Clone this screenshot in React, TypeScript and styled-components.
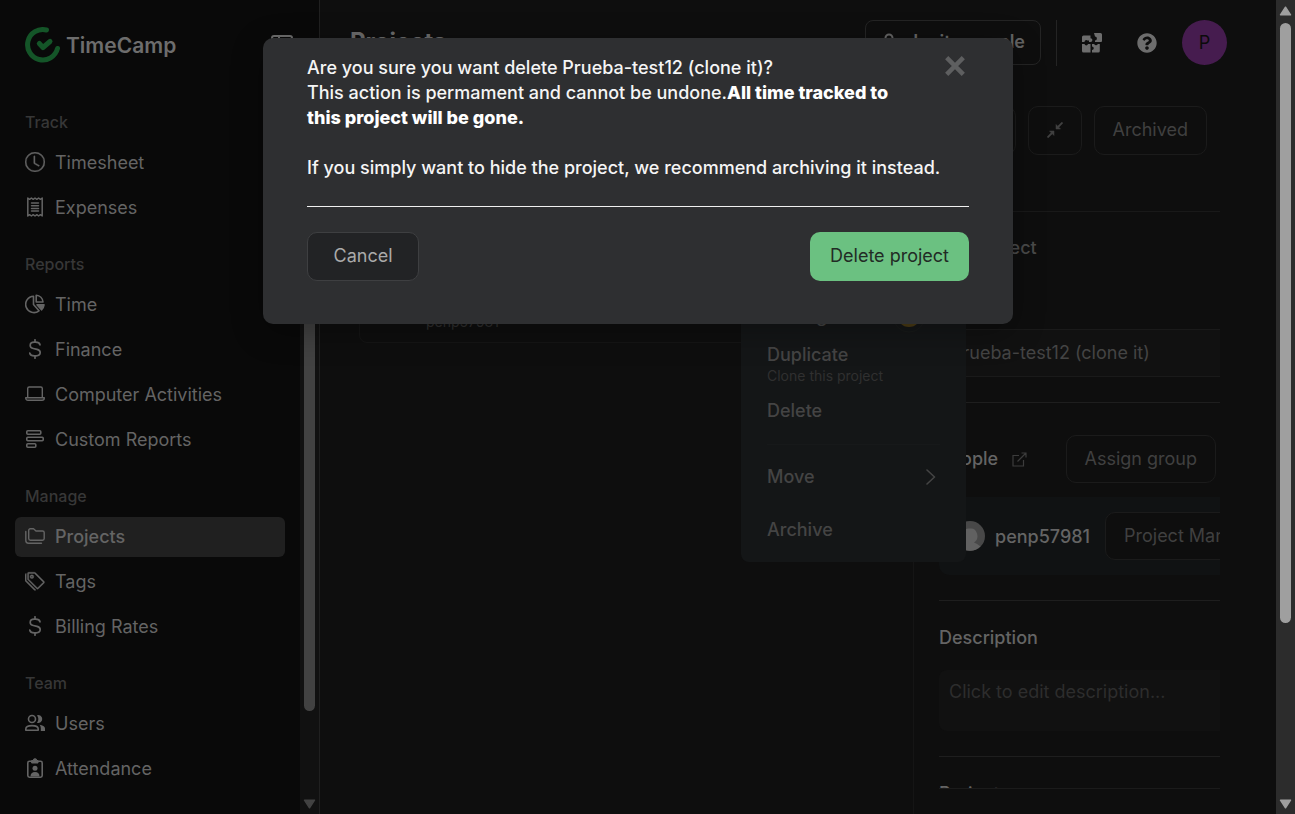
import React from "react";
import styled, { createGlobalStyle } from "styled-components";
import { BsClock, BsTags } from "react-icons/bs";
import { FaQuestionCircle } from "react-icons/fa";

const GlobalStyle = createGlobalStyle`
  *, *::before, *::after { box-sizing: border-box; }
  body { margin: 0; background: #0e0e0e; overflow: hidden; }
  body, button, input, textarea, select {
    font-family: Inter, "Open Sans", "Liberation Sans", sans-serif;
    font-size: 18px;
  }
  h1, h2, p, hr, ul { margin: 0; padding: 0; }
  ul { list-style: none; }
  button { cursor: pointer; }
`;

const Shell = styled.div`
  display: flex;
  height: 100vh;
  overflow: hidden;
  color: #6a6a6a;
`;

const Viewport = styled.div`
  position: relative;
  display: flex;
  flex: 1;
  min-width: 0;
`;

/* Scroll bars */
const Track = styled.div<{ $bg: string }>`
  display: flex;
  flex-direction: column;
  align-items: center;
  flex: none;
  width: 19px;
  padding: 6px 0 5px;
  gap: 7px;
  background: ${(p) => p.$bg};
`;
const Groove = styled.div`
  flex: 1;
  width: 11px;
`;
const Thumb = styled.div<{ $color: string; $share: number }>`
  height: ${(p) => p.$share}%;
  border-radius: 6px;
  background: ${(p) => p.$color};
`;

function Scrollbar({ bg, color, share }: { bg: string; color: string; share: number }) {
  return (
    <Track $bg={bg} aria-hidden="true">
      <svg width="13" height="10" viewBox="0 0 13 10">
        <path d="M6.500 1.200 L11.500 8.800 H1.500 Z" fill={color} stroke={color} strokeWidth="1.500" strokeLinejoin="round" />
      </svg>
      <Groove>
        <Thumb $color={color} $share={share} />
      </Groove>
      <svg width="13" height="10" viewBox="0 0 13 10">
        <path d="M6.500 8.800 L11.500 1.200 H1.500 Z" fill={color} stroke={color} strokeWidth="1.500" strokeLinejoin="round" />
      </svg>
    </Track>
  );
}

/* Sidebar */
const Sidebar = styled.aside`
  display: flex;
  flex-direction: column;
  flex: none;
  width: 320px;
  background: #090909;
  border-right: 1px solid #202020;
`;
const SidebarTop = styled.div`
  display: flex;
  align-items: center;
  justify-content: space-between;
  flex: none;
  height: 90px;
  padding: 0 26px 0 25px;
`;
const Brand = styled.a`
  display: flex;
  align-items: center;
  gap: 6px;
  color: #6d6d6d;
  font-size: 21px;
  font-weight: 600;
  text-decoration: none;
`;
const IconButton = styled.button`
  display: flex;
  padding: 0;
  border: 0;
  background: none;
  color: #6d6d6d;
`;
const SidebarBody = styled.div`
  display: flex;
  flex: 1;
  min-height: 0;
`;
const Nav = styled.nav`
  display: flex;
  flex-direction: column;
  flex: 1;
  gap: 25px;
  padding: 21px 15px 0;
  overflow: hidden;
`;
const NavLabel = styled.h2`
  padding-left: 10px;
  margin-bottom: 9px;
  font-size: 16px;
  font-weight: 500;
  line-height: 23px;
  color: #373737;
`;
const NavList = styled.ul`
  display: flex;
  flex-direction: column;
  gap: 5px;
`;
const NavLink = styled.a<{ $active?: boolean }>`
  display: flex;
  align-items: center;
  gap: 10px;
  height: 40px;
  padding: 0 10px 2px;
  border-radius: 6px;
  background: ${(p) => (p.$active ? "#202020" : "transparent")};
  color: #646464;
  font-weight: ${(p) => (p.$active ? 500 : 400)};
  text-decoration: none;

  svg { flex: none; width: 20px; height: 20px; }
`;

const stroke = { fill: "none", stroke: "currentColor", strokeWidth: 1.6, strokeLinejoin: "round", strokeLinecap: "round" } as const;

const ReceiptIcon = () => (
  <svg viewBox="0 0 20 20" {...stroke} strokeWidth="1.500">
    <path d="M2.800 1 4.600 2.300 6.400 1 8.200 2.300 10 1 11.800 2.300 13.600 1 15.400 2.300 17.200 1V19L15.400 17.700 13.600 19 11.800 17.700 10 19 8.200 17.700 6.400 19 4.600 17.700 2.800 19Z" />
    <path d="M6.500 6h7M6.500 8.700h7M6.500 11.400h7M6.500 14.100h7" />
  </svg>
);
const PieIcon = () => (
  <svg viewBox="0 0 20 20" {...stroke}>
    <path d="M8.500 2.200A8.200 8.200 0 1 0 14 16.800L8.500 10.500Z" />
    <path d="M11.200 1.200A7.500 7.500 0 0 1 18 8H11.200Z" />
    <path d="M12 10.800H19A8 8 0 0 1 16.500 15.800Z" fill="currentColor" />
  </svg>
);
const DollarIcon = () => (
  <svg viewBox="0 0 20 20" {...stroke} strokeWidth="1.700">
    <path d="M10 .8V3.200M10 16.800V19.200" />
    <path d="M15 5.800C14.600 4.100 13.200 3.200 10.500 3.200H9.300C6.700 3.200 5.200 4.500 5.200 6.400 5.200 8.200 6.300 9 8.300 9.500L12 10.400C14.200 10.900 15.200 11.900 15.200 13.600 15.200 15.600 13.700 16.800 11.200 16.800H9.300C6.800 16.800 5.200 15.900 4.800 14.200" />
  </svg>
);
const LaptopIcon = () => (
  <svg viewBox="0 0 20 20" {...stroke} strokeWidth="1.400">
    <path d="M2.700 13V4.500C2.700 3.500 3.200 3 4.200 3H15.800C16.800 3 17.300 3.500 17.300 4.500V13" />
    <path d="M.7 13.700H19.300C19.300 15.400 18.500 16.300 17 16.300H3C1.500 16.300.7 15.400.7 13.700Z" />
  </svg>
);
const BarsIcon = () => (
  <svg viewBox="0 0 20 20" {...stroke}>
    <rect x="1.800" y="1.800" width="14" height="3.400" rx="1" />
    <rect x="1.800" y="8.300" width="16.400" height="3.400" rx="1" />
    <rect x="1.800" y="14.800" width="9" height="3.400" rx="1" />
  </svg>
);
const FoldersIcon = () => (
  <svg viewBox="0 0 20 20" {...stroke} strokeWidth="1.400">
    <path d="M3.700 4.400C3.700 3.400 4.400 2.800 5.300 2.800H8.500L11 5H17.500C18.500 5 19.200 5.600 19.200 6.500V12.500C19.200 13.500 18.500 14.200 17.500 14.200H5.300C4.400 14.200 3.700 13.500 3.700 12.500Z" />
    <path d="M.8 5.500V14.500C.8 16.300 1.800 17.200 3.500 17.200H16.500" />
  </svg>
);
const UsersIcon = () => (
  <svg viewBox="0 0 20 20" {...stroke}>
    <circle cx="7" cy="6" r="3.500" />
    <path d="M.8 17.200V16C.8 13.800 2.800 12.600 7 12.600S13.200 13.800 13.200 16V17.200Z" />
    <path d="M12 2.200A4 4 0 1 1 12 9.800 6.500 6.500 0 0 0 12 2.200ZM14.500 11.800C17.500 12.200 20 13.400 20 15.500V18H15.800V15.500C15.800 14 15.500 12.900 14.500 11.800Z" fill="currentColor" stroke="none" />
  </svg>
);
const BadgeIcon = () => (
  <svg viewBox="0 0 20 20" {...stroke}>
    <rect x="2.800" y="3.300" width="14.400" height="15.900" rx="1.600" />
    <path d="M7 2.500H8.200A1.800 1.800 0 0 1 11.800 2.500H13V5H7Z" fill="currentColor" strokeWidth="1" />
    <circle cx="10" cy="10.200" r="2.500" fill="currentColor" stroke="none" />
    <path d="M5.500 18.500C5.500 15.500 7 14 10 14S14.500 15.500 14.500 18.500Z" fill="currentColor" stroke="none" />
  </svg>
);

const TagsIcon = styled(BsTags)`
  stroke: currentColor;
  stroke-width: 0.3;
`;
const ClockIcon = styled(BsClock)`
  stroke: currentColor;
  stroke-width: 0.3;
`;

const groups = [
  { label: "Track", items: [["Timesheet", ClockIcon], ["Expenses", ReceiptIcon]] },
  { label: "Reports", items: [["Time", PieIcon], ["Finance", DollarIcon], ["Computer Activities", LaptopIcon], ["Custom Reports", BarsIcon]] },
  { label: "Manage", items: [["Projects", FoldersIcon], ["Tags", TagsIcon], ["Billing Rates", DollarIcon]] },
  { label: "Team", items: [["Users", UsersIcon], ["Attendance", BadgeIcon]] },
] as { label: string; items: [string, React.ComponentType][] }[];

/* Main area */
const Main = styled.main`
  position: relative;
  display: flex;
  flex-direction: column;
  flex: 1;
  min-width: 0;
`;
const Header = styled.header`
  display: flex;
  align-items: center;
  justify-content: space-between;
  flex: none;
  height: 85px;
  padding: 0 49px 0 30px;
`;
const Title = styled.h1`
  padding-bottom: 2px;
  font-size: 24px;
  font-weight: 700;
  line-height: 30px;
  color: #6a6a6a;
`;
const HeaderTools = styled.div`
  display: flex;
  align-items: center;
`;
const InviteButton = styled.button`
  display: flex;
  align-items: center;
  gap: 16px;
  height: 45px;
  padding: 0 15px 2px;
  border: 1px solid #242424;
  border-radius: 8px;
  background: none;
  color: #646464;
  font-weight: 600;
`;
const HeaderRule = styled.span`
  width: 1px;
  height: 46px;
  margin: 0 25px 0 15px;
  background: #242424;
`;
const HeaderIcons = styled.div`
  display: flex;
  align-items: center;
  gap: 35px;
  margin-right: 25px;
`;
const UserButton = styled.button`
  width: 45px;
  height: 45px;
  padding: 0;
  border: 0;
  border-radius: 50%;
  background: #461c4f;
  color: #0b0b0b;
`;
const Toolbar = styled.div`
  display: flex;
  justify-content: flex-end;
  gap: 12px;
  flex: none;
  padding: 21px 69px 56px 30px;
`;
const GhostButton = styled.button`
  display: flex;
  align-items: center;
  flex: none;
  height: 49px;
  padding: 0 18px 2px;
  border: 1px solid #1b1b1b;
  border-radius: 10px;
  background: #0e0e0e;
  color: #404040;
  white-space: nowrap;
`;
const Body = styled.div`
  display: flex;
  flex: 1;
  min-height: 0;
  margin: 0 56px 0 30px;
  border-top: 1px solid #191919;
`;
const ListPane = styled.section`
  flex: 1;
  min-width: 0;
  padding: 55px 9px 0;
`;
const ProjectCard = styled.article`
  display: flex;
  flex-direction: column;
  justify-content: flex-end;
  height: 76px;
  padding: 0 0 10px 66px;
  border: 1px solid #151515;
  border-radius: 8px;
`;
const CardOwner = styled.p`
  font-size: 14px;
  line-height: 20px;
  color: #303030;
`;
const DetailPane = styled.section`
  display: flex;
  flex-direction: column;
  flex: none;
  width: 307px;
  padding: 0 0 25px 25px;
  border-left: 1px solid #151515;
`;
const DetailScroll = styled.div`
  display: flex;
  flex-direction: column;
  flex: 1;
  min-height: 0;
  overflow: hidden;
  border-bottom: 1px solid #1b1b1b;

  > * { flex: none; }
`;
const DetailTitle = styled.h2`
  padding: 22px 0 67px;
  font-size: 18px;
  font-weight: 500;
  line-height: 28px;
  color: #4a4a4a;
`;
const NameInput = styled.input`
  width: 100%;
  height: 48px;
  padding: 0 12px 2px;
  border: solid #1a1a1a;
  border-width: 1px 0;
  background: #111111;
  color: #444444;
  outline: 0;
`;
const Rule = styled.hr`
  height: 1px;
  border: 0;
  background: #1e1e1e;
`;
const NameBlock = styled.div`
  padding-bottom: 25px;
`;
const PeopleHeader = styled.div`
  display: flex;
  align-items: center;
  gap: 14px;
  padding: 32px 4px 14px 0;
`;
const SectionTitle = styled.h2`
  font-size: 18px;
  font-weight: 500;
  line-height: 28px;
  color: #646464;
`;
const PaneButton = styled(GhostButton)`
  height: 48px;
`;
const AssignButton = styled(PaneButton)`
  margin-left: auto;
`;
const PersonRow = styled.div`
  display: flex;
  align-items: center;
  gap: 10px;
  height: 78px;
  margin-bottom: 25px;
  padding-left: 16px;
  border-radius: 10px 0 0 10px;
  background: #101213;
  overflow: hidden;

  svg { flex: none; }
`;
const PersonName = styled.span`
  flex: none;
  width: 100px;
  font-weight: 500;
  color: #646464;
`;
const Block = styled.div`
  padding: 23px 0 25px;
`;
const DescriptionBox = styled.textarea`
  display: block;
  width: 100%;
  height: 61px;
  margin-top: 18px;
  padding: 8px 10px;
  border: 0;
  border-radius: 8px 0 0 8px;
  background: #111111;
  line-height: 28px;
  resize: none;
  outline: 0;

  &::placeholder { color: #2d2d2d; opacity: 1; }
`;

/* Context menu over the list */
const Menu = styled.div`
  position: absolute;
  top: 240px;
  right: 310px;
  width: 225px;
  height: 322px;
  padding: 52px 0 0;
  border-radius: 8px;
  background: #141617;
`;
const MenuItem = styled.button<{ $height: number }>`
  display: flex;
  align-items: center;
  justify-content: space-between;
  width: 100%;
  height: ${(p) => p.$height}px;
  padding: 0 29px 0 26px;
  border: 0;
  background: none;
  color: #444444;
  font-weight: 500;
  text-align: left;
`;
const MenuBadge = styled.svg`
  margin-right: 11px;
`;
const MenuText = styled.span`
  display: block;
  line-height: 22px;
`;
const MenuNote = styled.small`
  display: block;
  font-size: 14px;
  font-weight: 400;
  line-height: 20px;
  color: #303030;
`;
const MenuRule = styled(Rule)`
  margin: 14px 26px 5px;
  background: #17191a;
`;

/* Confirmation dialog */
const Overlay = styled.div`
  position: absolute;
  inset: 0;
  display: flex;
  justify-content: center;
  align-items: flex-start;
  padding-top: 38px;
`;
const Dialog = styled.div`
  position: relative;
  width: 750px;
  padding: 17px 44px 43px;
  border-radius: 10px;
  background: #2e2f31;
  box-shadow: 0 8px 32px rgba(0, 0, 0, 0.3);
`;
const DialogText = styled.p`
  color: #f5f5f5;
  font-size: 18px;
  font-weight: 500;
  line-height: 25px;

  & + & { margin-top: 25px; }
  strong { font-weight: 800; color: #ffffff; }
`;
const DialogRule = styled(Rule)`
  margin: 26px 0 25px;
  background: #f0f0f0;
`;
const DialogActions = styled.div`
  display: flex;
  justify-content: space-between;
`;
const CancelButton = styled.button`
  min-width: 112px;
  height: 49px;
  padding: 0 24px 2px;
  border: 1px solid #3e3f41;
  border-radius: 10px;
  background: #222325;
  color: #aaaaaa;
`;
const DeleteButton = styled.button`
  height: 49px;
  padding: 0 20px 2px;
  border: 0;
  border-radius: 10px;
  background: #6bc181;
  color: #222b25;
`;
const CloseButton = styled(IconButton)`
  position: absolute;
  top: 18px;
  right: 48px;
  color: #5e5f60;
`;

export default function App() {
  return (
    <Shell>
      <GlobalStyle />
      <Viewport>
        <Sidebar>
          <SidebarTop>
            <Brand href="#">
              <svg width="35" height="36" viewBox="0 0 35 36" fill="none" stroke="#145528" strokeWidth="5" strokeLinecap="round" strokeLinejoin="round">
                <path d="M21.500 3A15.200 15.200 0 1 0 32.500 21.500" />
                <path d="M14.300 16.500 18 20.500 25 14.500" />
              </svg>
              TimeCamp
            </Brand>
            <IconButton aria-label="Collapse sidebar">
              <svg width="22" height="20" viewBox="0 0 22 20" {...stroke} strokeWidth="2">
                <rect x="1" y="1" width="20" height="18" rx="2" />
                <path d="M8 2v16" />
              </svg>
            </IconButton>
          </SidebarTop>
          <SidebarBody>
            <Nav>
              {groups.map((g) => (
                <div key={g.label}>
                  <NavLabel>{g.label}</NavLabel>
                  <NavList>
                    {g.items.map(([name, Icon]) => (
                      <li key={name}>
                        <NavLink href="#" $active={name === "Projects"}>
                          <Icon />
                          {name}
                        </NavLink>
                      </li>
                    ))}
                  </NavList>
                </div>
              ))}
            </Nav>
            <Scrollbar bg="#111111" color="#424242" share={88} />
          </SidebarBody>
        </Sidebar>

        <Main>
          <Header>
            <Title>Projects</Title>
            <HeaderTools>
              <InviteButton>
                <svg width="16" height="18" viewBox="0 0 16 18" {...stroke} strokeWidth="2">
                  <circle cx="8" cy="5" r="3.500" />
                  <path d="M1.500 17C1.500 13 4 11.500 8 11.500S14.500 13 14.500 17Z" />
                </svg>
                Invite people
              </InviteButton>
              <HeaderRule />
              <HeaderIcons>
                <IconButton aria-label="Integrations">
                  <svg width="20" height="20" viewBox="0 0 20 20" fill="currentColor">
                    <path d="M1.500 2.500H8.500V5.200A1.900 1.900 0 0 1 8.500 9H7V7.500H5.500A1.800 1.800 0 0 0 2.500 9H0V4Q0 2.500 1.500 2.500Z" />
                    <path d="M12 0H18.500Q20 0 20 1.500V8Q20 9 19 9H13V7.400A1.800 1.800 0 1 0 13 3.600Z" />
                    <path d="M0 11H2.500A1.800 1.800 0 0 0 6 11H8.500V19.500H1.500Q0 19.500 0 18V15.500Z" />
                    <path d="M10 11H12.200A1.900 1.900 0 0 0 15.800 11H17.800V18Q17.800 19.500 16.300 19.500H10V17A1.600 1.600 0 0 0 10 13.500Z" />
                  </svg>
                </IconButton>
                <IconButton aria-label="Help">
                  <FaQuestionCircle size={20} />
                </IconButton>
              </HeaderIcons>
              <UserButton aria-label="Account">P</UserButton>
            </HeaderTools>
          </Header>

          <Toolbar>
            <GhostButton>Expand</GhostButton>
            <GhostButton aria-label="Collapse all">
              <svg width="16" height="16" viewBox="0 0 16 16" fill="currentColor" stroke="currentColor">
                <path d="M15.500.5 11 5M.5 15.500 5 11" strokeWidth="1.800" fill="none" />
                <path d="M9 2.500V7H13.500ZM7 13.500V9H2.500Z" strokeWidth=".5" />
              </svg>
            </GhostButton>
            <GhostButton>Archived</GhostButton>
          </Toolbar>

          <Body>
            <ListPane>
              <ProjectCard>
                <CardOwner>penp57981</CardOwner>
              </ProjectCard>
            </ListPane>
            <DetailPane>
              <DetailScroll>
                <DetailTitle>Edit project</DetailTitle>
                <NameBlock>
                  <NameInput aria-label="Project name" defaultValue="Prueba-test12 (clone it)" />
                </NameBlock>
                <Rule />
                <PeopleHeader>
                  <SectionTitle>People</SectionTitle>
                  <svg width="15" height="15" viewBox="0 0 15 15" fill="none" stroke="#3c3c3c" strokeWidth="1.200">
                    <path d="M7 3.500H1V14H11.500V8M5.500 9.500 13.500 1.500M9.500 1H14V5.500" />
                  </svg>
                  <AssignButton>Assign group</AssignButton>
                </PeopleHeader>
                <PersonRow>
                  <svg width="30" height="30" viewBox="0 0 30 30">
                    <circle cx="15" cy="15" r="15" fill="#484848" />
                    <path d="M15 7.500A6.500 7.500 0 0 1 19 21.500Q22 22.500 25.500 25.500A15 15 0 0 1 4.500 25.500Q8 22.500 11 21.500A6.500 7.500 0 0 1 15 7.500Z" fill="#616161" />
                  </svg>
                  <PersonName>penp57981</PersonName>
                  <PaneButton>Project Manager</PaneButton>
                </PersonRow>
                <Rule />
                <Block>
                  <SectionTitle>Description</SectionTitle>
                  <DescriptionBox aria-label="Description" placeholder="Click to edit description..." />
                </Block>
                <Rule />
                <Block>
                  <SectionTitle>Project</SectionTitle>
                </Block>
              </DetailScroll>
            </DetailPane>
          </Body>

          <Menu>
            <MenuItem $height={48}>
              <MenuText>Settings</MenuText>
              <MenuBadge width="34" height="34" viewBox="0 0 34 34">
                <circle cx="17" cy="17" r="16" fill="none" stroke="#191b1a" />
                <circle cx="17" cy="16" r="12" fill="#4b3b15" />
              </MenuBadge>
            </MenuItem>
            <MenuItem $height={50}>
              <span>
                <MenuText>Duplicate</MenuText>
                <MenuNote>Clone this project</MenuNote>
              </span>
            </MenuItem>
            <MenuItem $height={40}>Delete</MenuItem>
            <MenuRule />
            <MenuItem $height={53}>
              Move
              <svg width="12" height="16" viewBox="0 0 12 16" {...stroke}>
                <path d="M2 1 9.500 8 2 15" />
              </svg>
            </MenuItem>
            <MenuItem $height={53}>Archive</MenuItem>
          </Menu>
        </Main>

        <Overlay>
          <Dialog role="dialog" aria-modal="true" aria-label="Delete project">
            <DialogText>
              Are you sure you want delete Prueba-test12 (clone it)?
              <br />
              This action is permament and cannot be undone.<strong>All time tracked to<br />this project will be gone.</strong>
            </DialogText>
            <DialogText>If you simply want to hide the project, we recommend archiving it instead.</DialogText>
            <DialogRule />
            <DialogActions>
              <CancelButton>Cancel</CancelButton>
              <DeleteButton>Delete project</DeleteButton>
            </DialogActions>
            <CloseButton aria-label="Close">
              <svg width="20" height="20" viewBox="0 0 20 20" fill="none" stroke="currentColor" strokeWidth="4.500">
                <path d="M1.700 1.700 18.300 18.300M18.300 1.700 1.700 18.300" />
              </svg>
            </CloseButton>
          </Dialog>
        </Overlay>
      </Viewport>
      <Scrollbar bg="#2c2c2c" color="#9f9f9f" share={78} />
    </Shell>
  );
}
